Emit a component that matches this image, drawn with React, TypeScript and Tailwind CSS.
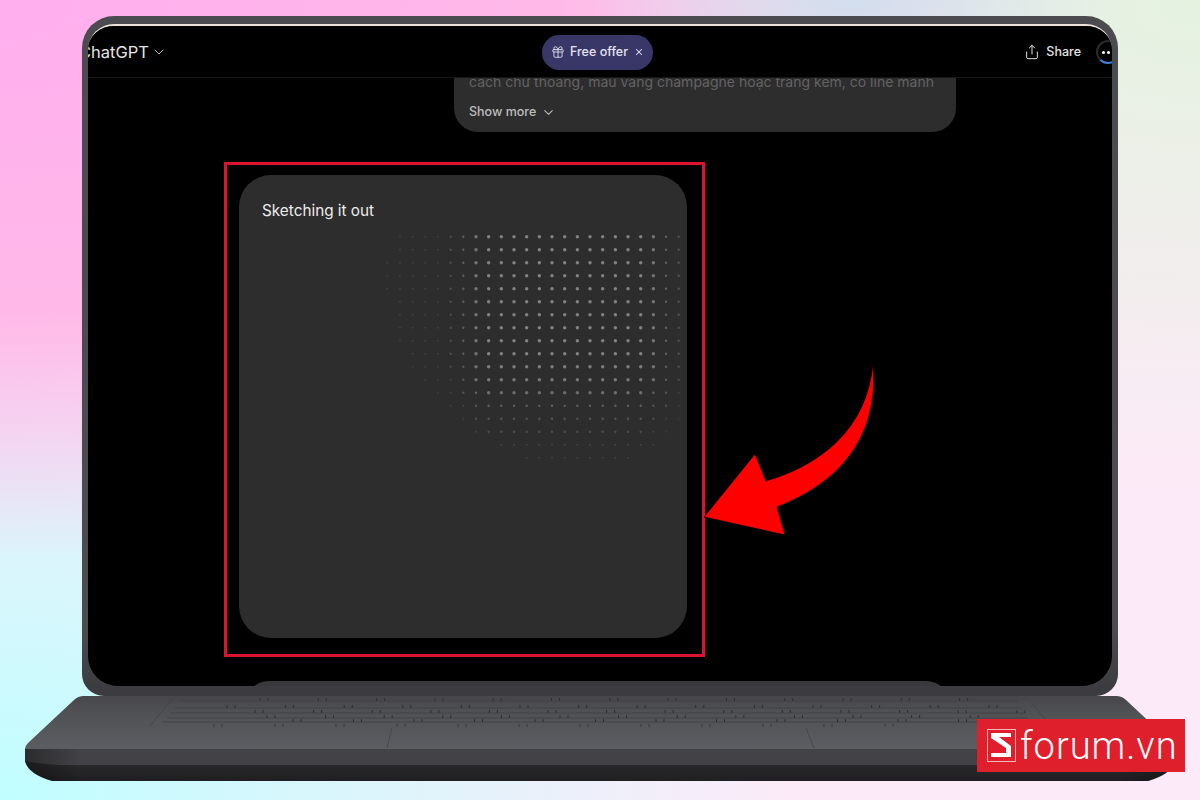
import { ChevronDown, Gift, Share, X } from "lucide-react";

const keyRows = [
  { y: 701, from: 178, to: 1018, tick: 260, gap: 58.3 },
  { y: 708, from: 175, to: 1022, tick: 227, gap: 58.6 },
  { y: 713, from: 170, to: 1025, tick: 255, gap: 58.6 },
  { y: 718, from: 167, to: 1028, tick: 267, gap: 58.6 },
  { y: 722, from: 163, to: 1032, tick: 293, gap: 60.5 },
];

function dotAlpha(col: number, row: number) {
  const starts = [1, 1, 0, 0, 0, 1, 1, 1, 1, 2, 2, 3, 4, 5, 6, 7, 9, 11];
  const ends = [23, 23, 23, 23, 23, 23, 23, 23, 23, 23, 23, 23, 23, 23, 23, 22, 21, 19];
  if (col < starts[row] || col > ends[row]) return 0;
  let a = 0.9;
  if (col <= 4) a = 0.22;
  else if (col === 5) a = 0.32;
  else if (col === 6) a = 0.5;
  else if (col === 7) a = 0.75;
  if (col === 21) a *= 0.85;
  if (col === 22) a *= 0.6;
  if (col === 23) a *= 0.4;
  const fade = [1, 1, 1, 1, 1, 1, 1, 1, 1, 1, 0.95, 0.88, 0.75, 0.58, 0.45, 0.36, 0.3, 0.26];
  return a * fade[row];
}

function DotGrid() {
  const dots = [];
  for (let row = 0; row < 18; row++) {
    for (let col = 0; col < 24; col++) {
      const a = dotAlpha(col, row);
      if (a > 0) {
        dots.push(
          <circle
            key={`${row}-${col}`}
            cx={4.3 + col * 12.67}
            cy={6.7 + row * 13}
            r={a > 0.6 ? 1.7 : a > 0.3 ? 1.2 : 0.9}
            fill="#8c8c8c"
            opacity={a}
          />,
        );
      }
    }
  }
  return (
    <svg width="304" height="240" className="ml-auto mr-0 block">
      {dots}
    </svg>
  );
}

function LaptopBase() {
  return (
    <svg width="1200" height="85" viewBox="0 696 1200 85" className="block shrink-0">
      <defs>
        <linearGradient id="deck" x1="0" y1="0" x2="0" y2="1">
          <stop offset="0" stopColor="#47474b" />
          <stop offset="0.3" stopColor="#505155" />
          <stop offset="1" stopColor="#5c5d62" />
        </linearGradient>
        <linearGradient id="lower" x1="0" y1="0" x2="0" y2="1">
          <stop offset="0" stopColor="#333336" />
          <stop offset="1" stopColor="#1f1f21" />
        </linearGradient>
        <linearGradient id="edge" x1="0" y1="0" x2="1" y2="0">
          <stop offset="0" stopColor="#000" stopOpacity="0.35" />
          <stop offset="0.05" stopColor="#000" stopOpacity="0" />
          <stop offset="0.95" stopColor="#000" stopOpacity="0" />
          <stop offset="1" stopColor="#000" stopOpacity="0.35" />
        </linearGradient>
      </defs>
      <path d="M25 750 H1175 V761 Q1172 774 1148 781 H52 Q28 774 25 761 Z" fill="url(#lower)" />
      <path d="M25 748 H1175 V761 Q1160 764 1140 765 H60 Q40 764 25 761 Z" fill="#434347" />
      <path d="M25 748 H1175 V761 Q1172 774 1148 781 H52 Q28 774 25 761 Z" fill="url(#edge)" />
      <path d="M84 696 H1116 Q1122 696 1126 700 L1172 743 Q1175 746 1175 749 H25 Q25 746 28 743 L74 700 Q78 696 84 696 Z" fill="url(#deck)" />
      <path d="M172 699 H1028 L1045 719 M172 699 L150 726" stroke="#46464a" strokeWidth="1" fill="none" />
      <path d="M392 728 L387 748 M806 728 L814 748" stroke="#47474b" strokeWidth="1" fill="none" />
      {keyRows.map((r) => (
        <g key={r.y}>
          <line x1={r.from} x2={r.to} y1={r.y} y2={r.y} stroke="#404044" strokeWidth="0.8" />
          {Array.from({ length: 15 }, (_, i) => r.tick + i * r.gap)
            .filter((x) => x < r.to - 8)
            .map((x) => (
              <path key={x} d={`M${x} ${r.y - 3} v3 M${x + 8} ${r.y - 3} v3`} stroke="#2e2e32" strokeWidth="1" />
            ))}
        </g>
      ))}
      {[214, 275, 336, 397, 458, 519, 580, 641, 702, 763, 824, 885].map((x) => (
        <path key={x} d={`M${x} 724 v3 M${x + 8} 724 v3`} stroke="#38383c" strokeWidth="1" />
      ))}
    </svg>
  );
}

function Arrow() {
  return (
    <svg width="200" height="190" viewBox="0 0 200 190" className="absolute left-[695px] top-[355px]">
      <path
        d="M178 8 C183 60 165 120 82 152 L90 180 L9 162 L60 99 L71 126 C125 110 172 75 178 8 Z"
        fill="#ff0000"
        stroke="#000"
        strokeWidth="0.75"
      />
    </svg>
  );
}

function Watermark() {
  return (
    <div className="absolute left-[977px] top-[719px] flex h-[53px] w-[208px] items-center gap-[4px] bg-[#df1f2b] pl-[10px]">
      <svg width="29" height="33" viewBox="0 0 29 33" className="shrink-0">
        <rect x="0.5" y="0.5" width="28" height="32" fill="none" stroke="#f6b8bd" strokeWidth="1" />
        <path d="M4 4 H24 V8 H12 L24 17 V28 H4 V24 H19 V19 L4 9 Z" fill="#fff" />
      </svg>
      <span className="font-['Roboto',sans-serif] text-[38px] leading-none font-light tracking-[1px] text-white">forum.vn</span>
    </div>
  );
}

export default function App() {
  return (
    <div className="relative flex h-[800px] w-[1200px] flex-col items-center overflow-hidden bg-[#fdeaf8] bg-[radial-gradient(ellipse_260px_110px_at_850px_0,#d2deee,transparent),radial-gradient(ellipse_1000px_560px_at_0_0,#ffaeee,#ffb8e8_55%,transparent),radial-gradient(ellipse_800px_560px_at_0_100%,#c0feff,transparent),radial-gradient(ellipse_800px_500px_at_100%_0,#e4f2e0,transparent)] font-['Inter',sans-serif]">
      <div className="mt-4 h-[680px] w-[1036px] shrink-0 rounded-t-[32px] rounded-b-[22px] bg-linear-to-b from-[#4c4c50] from-90% to-[#3c3c40] to-99% px-[6px] pt-[8px] pb-[10px]">
        <div className="flex h-full flex-col overflow-hidden rounded-t-[26px] rounded-b-[30px] border-t-2 border-[#efe2da] bg-black">
          <header className="relative z-10 flex h-[52px] shrink-0 items-center justify-between border-b border-[#161616] bg-black pt-[1px]">
            <div className="-ml-[9px] flex items-center gap-[2px] text-[16.5px] text-[#e6e6e6]">
              ChatGPT
              <ChevronDown size={16} strokeWidth={1.5} className="text-[#b0b0b0]" />
            </div>
            <div className="absolute left-[454px] flex h-[35px] w-[111px] items-center justify-center gap-[5px] rounded-full bg-[#393668] text-[12.5px] font-medium text-[#e4e3f0]">
              <Gift size={14} strokeWidth={1.5} />
              Free offer
              <X size={10} strokeWidth={2.5} className="ml-[1px]" />
            </div>
            <div className="-mr-[8px] flex items-center gap-[15px]">
              <div className="flex items-center gap-[6px] text-[12.5px] font-medium text-[#e2e2e2]">
                <Share size={16} strokeWidth={1.5} />
                Share
              </div>
              <div className="flex h-[24px] w-[24px] items-center justify-center gap-[2px] rounded-full border-2 border-[#2a2a2a] border-b-[#3f7fe0]">
                <span className="h-[3px] w-[3px] rounded-full bg-white" />
                <span className="h-[3px] w-[3px] rounded-full bg-white" />
                <span className="h-[3px] w-[3px] rounded-full bg-white" />
              </div>
            </div>
          </header>
          <main className="flex flex-col">
            <div className="ml-[366px] h-[54px] w-[502px] overflow-hidden rounded-b-[24px] bg-[#2d2d2d] px-[15px]">
              <p className="-mt-[5px] text-[14px] leading-[18px] whitespace-nowrap text-[#636363]">
                cách chữ thoáng, màu vàng champagne hoặc trắng kem, có line mảnh
              </p>
              <div className="mt-[12px] flex items-center gap-[5px] text-[12.5px] font-medium text-[#bdbdbd]">
                Show more
                <ChevronDown size={15} strokeWidth={1.75} />
              </div>
            </div>
            <section className="mt-[43px] ml-[151px] h-[463px] w-[448px] rounded-[32px] bg-[#2d2d2d] pt-[26px]">
              <h2 className="pl-[23px] text-[15.3px] leading-5 font-normal text-[#ececec]">Sketching it out</h2>
              <div className="mt-[9px]">
                <DotGrid />
              </div>
            </section>
            <div className="mt-[43px] ml-[157px] h-[40px] w-[705px] shrink-0 rounded-t-[24px] bg-[#39393b]" />
          </main>
        </div>
      </div>
      <LaptopBase />
      <div className="absolute left-[224px] top-[162px] h-[495px] w-[481px] border-[3px] border-[#dc1430]" />
      <Arrow />
      <Watermark />
    </div>
  );
}
